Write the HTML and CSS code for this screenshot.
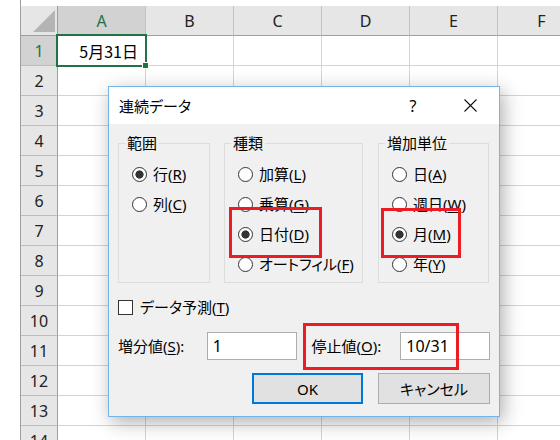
FILE: index.html
```html
<!DOCTYPE html>
<html lang="ja">
<head>
<meta charset="utf-8">
<title>連続データ</title>
<link rel="stylesheet" href="styles.css">
</head>
<body>
<div class="sheet">
  <div class="corner"><svg width="36" height="29" viewBox="0 0 36 29"><polygon points="34,4 34,26 12,26" fill="#b4b4b4"/></svg></div>
  <div class="ch sel-h">A</div><div class="ch">B</div><div class="ch">C</div><div class="ch">D</div><div class="ch">E</div><div class="ch">F</div>

  <div class="rh sel-h">1</div><div class="c a1"><span class="val">5月31日</span></div><div class="c"></div><div class="c"></div><div class="c"></div><div class="c"></div><div class="c"></div>
  <div class="rh">2</div><div class="c"></div><div class="c"></div><div class="c"></div><div class="c"></div><div class="c"></div><div class="c"></div>
  <div class="rh">3</div><div class="c"></div><div class="c"></div><div class="c"></div><div class="c"></div><div class="c"></div><div class="c"></div>
  <div class="rh">4</div><div class="c"></div><div class="c"></div><div class="c"></div><div class="c"></div><div class="c"></div><div class="c"></div>
  <div class="rh">5</div><div class="c"></div><div class="c"></div><div class="c"></div><div class="c"></div><div class="c"></div><div class="c"></div>
  <div class="rh">6</div><div class="c"></div><div class="c"></div><div class="c"></div><div class="c"></div><div class="c"></div><div class="c"></div>
  <div class="rh">7</div><div class="c"></div><div class="c"></div><div class="c"></div><div class="c"></div><div class="c"></div><div class="c"></div>
  <div class="rh">8</div><div class="c"></div><div class="c"></div><div class="c"></div><div class="c"></div><div class="c"></div><div class="c"></div>
  <div class="rh">9</div><div class="c"></div><div class="c"></div><div class="c"></div><div class="c"></div><div class="c"></div><div class="c"></div>
  <div class="rh">10</div><div class="c"></div><div class="c"></div><div class="c"></div><div class="c"></div><div class="c"></div><div class="c"></div>
  <div class="rh">11</div><div class="c"></div><div class="c"></div><div class="c"></div><div class="c"></div><div class="c"></div><div class="c"></div>
  <div class="rh">12</div><div class="c"></div><div class="c"></div><div class="c"></div><div class="c"></div><div class="c"></div><div class="c"></div>
  <div class="rh">13</div><div class="c"></div><div class="c"></div><div class="c"></div><div class="c"></div><div class="c"></div><div class="c"></div>
  <div class="rh">14</div><div class="c"></div><div class="c"></div><div class="c"></div><div class="c"></div><div class="c"></div><div class="c"></div>
</div>

<div class="dialog">
  <div class="titlebar">
    <span class="title">連続データ</span>
    <span class="help">?</span>
    <span class="close"><svg width="13" height="13" viewBox="0 0 13 13"><path d="M0.5 0.5L12.5 12.5M12.5 0.5L0.5 12.5" stroke="#111" stroke-width="1.1" fill="none"/></svg></span>
  </div>
  <div class="dbody">
    <div class="groups">
      <fieldset class="grp g1">
        <legend>範囲</legend>
        <div class="opts">
          <div class="opt"><span class="radio on"></span><span>行(<u>R</u>)</span></div>
          <div class="opt"><span class="radio"></span><span>列(<u>C</u>)</span></div>
        </div>
      </fieldset>
      <fieldset class="grp g2">
        <legend>種類</legend>
        <div class="opts">
          <div class="opt"><span class="radio"></span><span>加算(<u>L</u>)</span></div>
          <div class="opt"><span class="radio"></span><span>乗算(<u>G</u>)</span></div>
          <div class="opt"><span class="radio on"></span><span>日付(<u>D</u>)</span></div>
          <div class="opt"><span class="radio"></span><span>オートフィル(<u>F</u>)</span></div>
        </div>
      </fieldset>
      <fieldset class="grp g3">
        <legend>増加単位</legend>
        <div class="opts">
          <div class="opt"><span class="radio"></span><span>日(<u>A</u>)</span></div>
          <div class="opt"><span class="radio"></span><span>週日(<u>W</u>)</span></div>
          <div class="opt"><span class="radio on"></span><span>月(<u>M</u>)</span></div>
          <div class="opt"><span class="radio"></span><span>年(<u>Y</u>)</span></div>
        </div>
      </fieldset>
    </div>
    <div class="chkrow"><span class="check"></span><span>データ予測(<u>T</u>)</span></div>
    <div class="inrow">
      <span class="lbl">増分値(<u>S</u>):</span>
      <span class="field">1</span>
      <span class="lbl lbl2">停止値(<u>O</u>):</span>
      <span class="field">10/31</span>
    </div>
    <div class="btnrow">
      <span class="btn ok">OK</span>
      <span class="btn">キャンセル</span>
    </div>
  </div>
</div>

<div class="mark m1"></div>
<div class="mark m2"></div>
<div class="mark m3"></div>
</body>
</html>
```

FILE: styles.css
```css
html, body {
  margin: 0;
  padding: 0;
}
body {
  width: 560px;
  height: 440px;
  overflow: hidden;
  position: relative;
  background: #fff;
  font-family: "Noto Sans", "Noto Sans CJK JP", sans-serif;
  color: #000;
}

/* ---------- spreadsheet ---------- */
.sheet {
  margin-left: 20px;
  padding-top: 6px;
  border-left: 1px solid #9e9e9e;
  display: grid;
  grid-template-columns: 37px repeat(6, 88px);
  grid-auto-rows: 30px;
  height: 440px;
  box-sizing: border-box;
}
.corner {
  background: #e6e6e6;
  border-right: 1px solid #9e9e9e;
  border-bottom: 1px solid #9e9e9e;
  box-sizing: border-box;
  overflow: hidden;
}
.corner svg { display: block; }
.ch {
  background: #e6e6e6;
  border-right: 1px solid #c4c4c4;
  border-bottom: 1px solid #9e9e9e;
  box-sizing: border-box;
  display: flex;
  align-items: center;
  justify-content: center;
  font-size: 16px;
  color: #222;
}
.rh {
  background: #e6e6e6;
  border-right: 1px solid #9e9e9e;
  border-bottom: 1px solid #bdbdbd;
  box-sizing: border-box;
  display: flex;
  align-items: center;
  justify-content: center;
  font-size: 16px;
  color: #222;
}
.sel-h {
  background: #d2d2d2;
  color: #217346;
}
.c {
  border-right: 1px solid #d4d4d4;
  border-bottom: 1px solid #d4d4d4;
  box-sizing: border-box;
}
.a1 {
  position: relative;
  display: flex;
  align-items: center;
  justify-content: flex-end;
  padding-right: 7px;
}
.a1 .val {
  font-family: "Noto Sans CJK JP", sans-serif;
  font-size: 16px;
  color: #000;
}
.a1::before {
  content: "";
  position: absolute;
  top: -2px;
  left: -2px;
  right: -2px;
  bottom: -2px;
  border: 2px solid #217346;
}
.a1::after {
  content: "";
  position: absolute;
  right: -3px;
  bottom: -3px;
  width: 5px;
  height: 5px;
  background: #217346;
  outline: 1px solid #fff;
}

/* ---------- dialog ---------- */
.dialog {
  position: absolute;
  left: 108px;
  top: 86px;
  width: 392px;
  box-sizing: border-box;
  border: 1px solid #74b3ec;
  background: #f0f0f0;
  box-shadow: 3px 5px 18px rgba(0, 0, 0, 0.32);
  font-size: 15px;
  line-height: 20px;
  font-feature-settings: "palt";
}
.titlebar {
  height: 37px;
  background: #fff;
  display: flex;
  align-items: center;
  padding-left: 10px;
  padding-right: 14px;
}
.title {
  flex: 1;
  font-size: 15px;
}
.help {
  width: 30px;
  text-align: center;
  margin-right: 27px;
  font-size: 16px;
}
.close {
  width: 30px;
  display: flex;
  justify-content: center;
}
.close svg { display: block; }

.dbody {
  padding: 9px 9px 12px 9px;
}
.groups {
  display: flex;
  gap: 14px;
}
.grp {
  margin: 0;
  padding: 0;
  border: 1px solid #dcdcdc;
  height: 150px;
  box-sizing: border-box;
  flex-shrink: 0;
  min-width: 0;
}
.grp legend {
  padding: 0 2px;
  margin-left: 6px;
  line-height: 20px;
}
.g1 { width: 92px; }
.g2 { width: 139px; }
.g3 { width: 111px; margin-left: 1px; }
.opts {
  padding: 6px 0 0 13px;
}
.opt {
  height: 30px;
  display: flex;
  align-items: center;
  gap: 6px;
  white-space: nowrap;
}
.radio {
  width: 15px;
  height: 15px;
  box-sizing: border-box;
  border: 1px solid #333;
  border-radius: 50%;
  background: #fff;
  flex-shrink: 0;
}
.radio.on {
  background: radial-gradient(circle, #333 0 3.8px, #fff 4.4px);
}
u {
  text-decoration: underline;
  text-underline-offset: 2px;
}

.chkrow {
  margin-top: 14px;
  height: 20px;
  display: flex;
  align-items: center;
  gap: 7px;
}
.check {
  width: 15px;
  height: 15px;
  box-sizing: border-box;
  border: 1px solid #333;
  background: #fff;
}

.inrow {
  margin-top: 15px;
  height: 28px;
  display: flex;
  align-items: center;
}
.lbl {
  width: 89px;
  white-space: nowrap;
}
.lbl2 { margin-left: 15px; }
.field {
  width: 90px;
  height: 28px;
  box-sizing: border-box;
  border: 1px solid #adadad;
  background: #fff;
  padding-left: 5px;
  display: flex;
  align-items: center;
  font-size: 16px;
}

.btnrow {
  margin-top: 13px;
  display: flex;
  justify-content: flex-end;
  gap: 15px;
}
.btn {
  width: 112px;
  height: 31px;
  box-sizing: border-box;
  border: 1px solid #adadad;
  background: #e1e1e1;
  display: flex;
  align-items: center;
  justify-content: center;
}
.btn.ok {
  width: 111px;
  border: 2px solid #0078d7;
}

/* ---------- red annotation boxes ---------- */
.mark {
  position: absolute;
  border: 3px solid #ec1c24;
  box-sizing: border-box;
}
.m1 { left: 229px; top: 207px; width: 93px; height: 51px; }
.m2 { left: 381px; top: 208px; width: 80px; height: 50px; }
.m3 { left: 303px; top: 323px; width: 156px; height: 47px; }
```
